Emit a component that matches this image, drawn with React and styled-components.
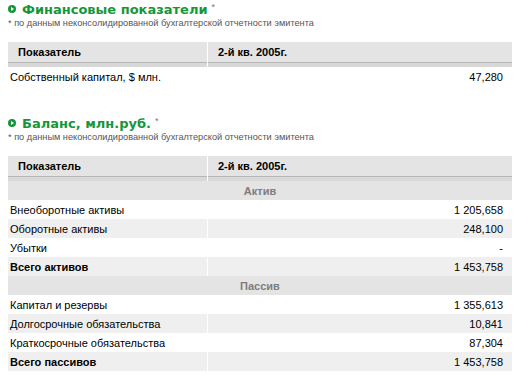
import styled, { createGlobalStyle } from "styled-components";

const GlobalStyle = createGlobalStyle`
    body{
        margin:0;
        background:#fff;
        font-family: "Liberation Sans", Arial, sans-serif;
        color:#000;
    }
`;

const Page = styled.div`
    width: 513px;
    padding-top: 2px;
`;

const Section = styled.section`
    margin-bottom: 30px;
`;

const Title = styled.h2`
    display:flex;
    align-items:center;
    height: 14px;
    margin: 0 0 0 8px;
    font-family: "DejaVu Sans", Verdana, sans-serif;
    font-size: 13px;
    font-weight: bold;
    color: #16963a;
`;

const TitleText = styled.span`
    margin-left: 6px;
`;

const Star = styled.span`
    margin-left: 4px;
    font-family: "Liberation Sans", Arial, sans-serif;
    font-size: 9px;
    font-weight: normal;
    color: #777;
    align-self: flex-start;
`;

const Note = styled.div`
    margin: 1px 0 0 8px;
    font-size: 9.2px;
    line-height: 12px;
    color: #555;
`;

const Table = styled.table`
    width: 506px;
    margin: 13px 0 0 7px;
    border-collapse: separate;
    border-spacing: 1px 0;
    font-size: 11px;
`;

const HeadCell = styled.th`
    height: 20px;
    padding: 0 0 0 10px;
    text-align: left;
    font-weight: bold;
    background: #e4e4e4;
    border-bottom: 1px solid #b6b6b6;
    width: ${props => props.first ? "189px" : "auto"};
`;

const Strip = styled.td`
    height: 4px;
    padding: 0;
    background: #d8d8d8;
`;

const GroupCell = styled.td`
    height: 18px;
    padding: 1px 0 0;
    text-align: center;
    font-weight: bold;
    color: #7d7d7d;
    background: #e4e4e4;
`;

const Cell = styled.td`
    height: 18px;
    padding: ${props => props.num ? "1px 9px 0 0" : "1px 0 0 2px"};
    text-align: ${props => props.num ? "right" : "left"};
    font-weight: ${props => props.bold ? "bold" : "normal"};
    background: ${props => props.shade ? "#efefef" : "#fff"};
`;

const Bullet = () => (
    <svg width="8" height="8" viewBox="0 0 8 8">
        <circle cx="4" cy="4" r="4" fill="#16963a" />
        <path d="M3 2 L6 4 L3 6 Z" fill="#fff" />
    </svg>
);

const finance = [
    { name: "Собственный капитал, $ млн.", value: "47,280" },
];

const balance = [
    { group: "Актив" },
    { name: "Внеоборотные активы", value: "1 205,658" },
    { name: "Оборотные активы", value: "248,100" },
    { name: "Убытки", value: "-" },
    { name: "Всего активов", value: "1 453,758", bold: true },
    { group: "Пассив" },
    { name: "Капитал и резервы", value: "1 355,613" },
    { name: "Долгосрочные обязательства", value: "10,841" },
    { name: "Краткосрочные обязательства", value: "87,304" },
    { name: "Всего пассивов", value: "1 453,758", bold: true },
];

const DataTable = ({ rows }) => {
    let n = 0;
    return (
        <Table>
            <thead>
                <tr>
                    <HeadCell first>Показатель</HeadCell>
                    <HeadCell>2-й кв. 2005г.</HeadCell>
                </tr>
                <tr>
                    <Strip />
                    <Strip />
                </tr>
            </thead>
            <tbody>
                {rows.map((row, i) => {
                    if (row.group) {
                        n = 0;
                        return (
                            <tr key={i}>
                                <GroupCell colSpan={2}>{row.group}</GroupCell>
                            </tr>
                        );
                    }
                    const shade = n % 2 === 1;
                    n++;
                    return (
                        <tr key={i}>
                            <Cell shade={shade} bold={row.bold}>{row.name}</Cell>
                            <Cell shade={shade} num>{row.value}</Cell>
                        </tr>
                    );
                })}
            </tbody>
        </Table>
    );
};

const Block = ({ title, rows }) => (
    <Section>
        <Title>
            <Bullet />
            <TitleText>{title}</TitleText>
            <Star>*</Star>
        </Title>
        <Note>* по данным неконсолидированной бухгалтерской отчетности эмитента</Note>
        <DataTable rows={rows} />
    </Section>
);

const App = () => (
    <Page>
        <GlobalStyle />
        <Block title="Финансовые показатели" rows={finance} />
        <Block title="Баланс, млн.руб." rows={balance} />
    </Page>
);

export default App;
